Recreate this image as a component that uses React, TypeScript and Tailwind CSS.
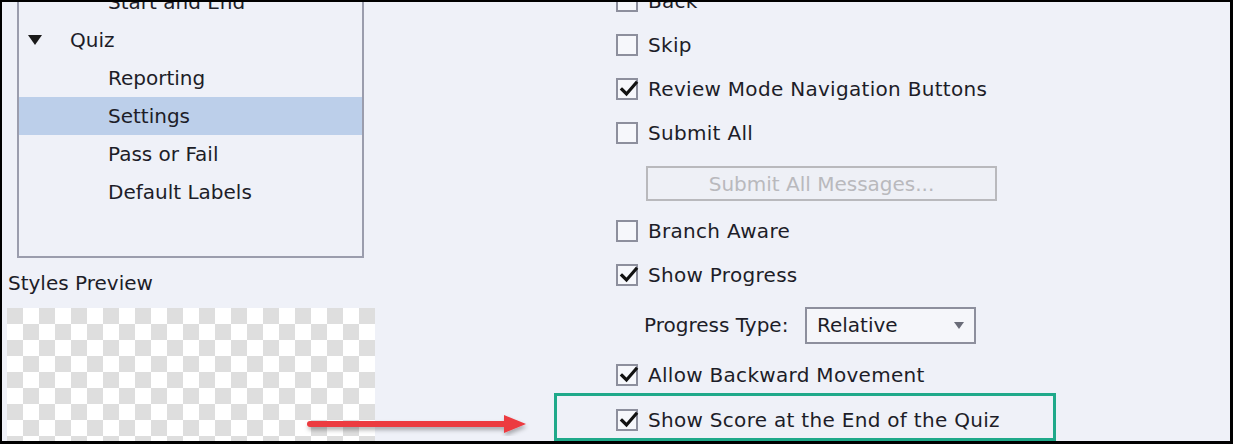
import React from "react";

const treeRows = [
  { label: "Start and End", level: 1 },
  { label: "Quiz", level: 0, open: true },
  { label: "Reporting", level: 1 },
  { label: "Settings", level: 1, selected: true },
  { label: "Pass or Fail", level: 1 },
  { label: "Default Labels", level: 1 },
];

function Box({ checked }: { checked?: boolean }) {
  return (
    <span className="relative flex h-[22px] w-[22px] shrink-0 items-center justify-center border-2 border-[#8d8f9d] bg-[#f6f7fb]">
      {checked ? (
        <svg viewBox="0 0 20 20" className="absolute left-[1px] top-[-1px] h-[20px] w-[20px]">
          <path d="M3 10.5 L7.5 15 L17 4" fill="none" stroke="#111" strokeWidth="3.2" strokeLinecap="square" />
        </svg>
      ) : null}
    </span>
  );
}

function CheckRow({ label, checked }: { label: string; checked?: boolean }) {
  return (
    <div className="flex h-[44px] items-center gap-[10px]">
      <Box checked={checked} />
      <span className="tracking-[0.3px]">{label}</span>
    </div>
  );
}

export default function App() {
  return (
    <div className="relative h-[444px] w-[1233px] overflow-hidden border-t-2 border-l-2 border-r-[3px] border-b-[3px] border-black bg-[#eff1f8] font-['DejaVu_Sans',sans-serif] text-[20px] text-[#1d1d28]">
      <div className="flex h-full">
        {/* left side */}
        <div className="flex w-[614px] shrink-0 flex-col">
          <div className="ml-[15px] mt-[-21px] w-[347px] border-2 border-[#9b9dad] pb-[45px]">
            {treeRows.map((row) => (
              <div
                key={row.label}
                className={`flex h-[38px] items-center ${row.selected ? "bg-[#bccfea]" : ""}`}
              >
                {row.level === 0 ? (
                  <>
                    <svg viewBox="0 0 14 10" className="ml-[9px] h-[10px] w-[14px]">
                      <path d="M0 0 H14 L7 10 Z" fill="#1a1a1a" />
                    </svg>
                    <span className="ml-[28px]">{row.label}</span>
                  </>
                ) : (
                  <span className="ml-[89px]">{row.label}</span>
                )}
              </div>
            ))}
          </div>
          <div className="ml-[6px] mt-[12px] h-[26px] leading-[26px]">Styles Preview</div>
          <div className="ml-[5px] mt-[12px] h-[140px] w-[368px] bg-[conic-gradient(#fff_25%,#dedede_0_50%,#fff_0_75%,#dedede_0)] bg-[length:32px_32px]" />
        </div>

        {/* right side */}
        <div className="flex flex-col">
          <div className="mt-[-23px]">
            <CheckRow label="Back" />
          </div>
          <CheckRow label="Skip" />
          <CheckRow label="Review Mode Navigation Buttons" checked />
          <CheckRow label="Submit All" />
          <div className="flex h-[54px] items-start pt-[11px]">
            <div className="ml-[30px] flex h-[35px] w-[351px] items-center justify-center border-2 border-[#b9b9bd] bg-[#eef0f6] text-[#b9b9bd]">
              Submit All Messages...
            </div>
          </div>
          <CheckRow label="Branch Aware" />
          <CheckRow label="Show Progress" checked />
          <div className="flex h-[56px] items-center">
            <span className="ml-[28px] w-[161px]">Progress Type:</span>
            <div className="flex h-[37px] w-[171px] items-center justify-between border-2 border-[#8d8f9d] bg-[#f5f6fa] pl-[10px] pr-[10px]">
              <span>Relative</span>
              <svg viewBox="0 0 10 7" className="h-[7px] w-[10px]">
                <path d="M0 0 H10 L5 7 Z" fill="#6a6c78" />
              </svg>
            </div>
          </div>
          <CheckRow label="Allow Backward Movement" checked />
          <div className="ml-[-62px] mt-[-4px] h-[48px] w-[502px] border-[3px] border-[#1fa98a] pl-[59px]">
            <div className="mt-[2px]">
              <CheckRow label="Show Score at the End of the Quiz" checked />
            </div>
          </div>
        </div>
      </div>

      <svg
        viewBox="0 0 230 24"
        className="absolute left-[302px] top-[410px] h-[24px] w-[230px]"
      >
        <defs>
          <filter id="sh" x="-5%" y="-50%" width="110%" height="200%">
            <feDropShadow dx="1" dy="3" stdDeviation="2" floodColor="#000" floodOpacity="0.3" />
          </filter>
        </defs>
        <g filter="url(#sh)">
          <path d="M6 12 H204" stroke="#ec3a3f" strokeWidth="6" strokeLinecap="round" />
          <path d="M200 3 L222 12 L200 21 Z" fill="#ec3a3f" />
        </g>
      </svg>
    </div>
  );
}
